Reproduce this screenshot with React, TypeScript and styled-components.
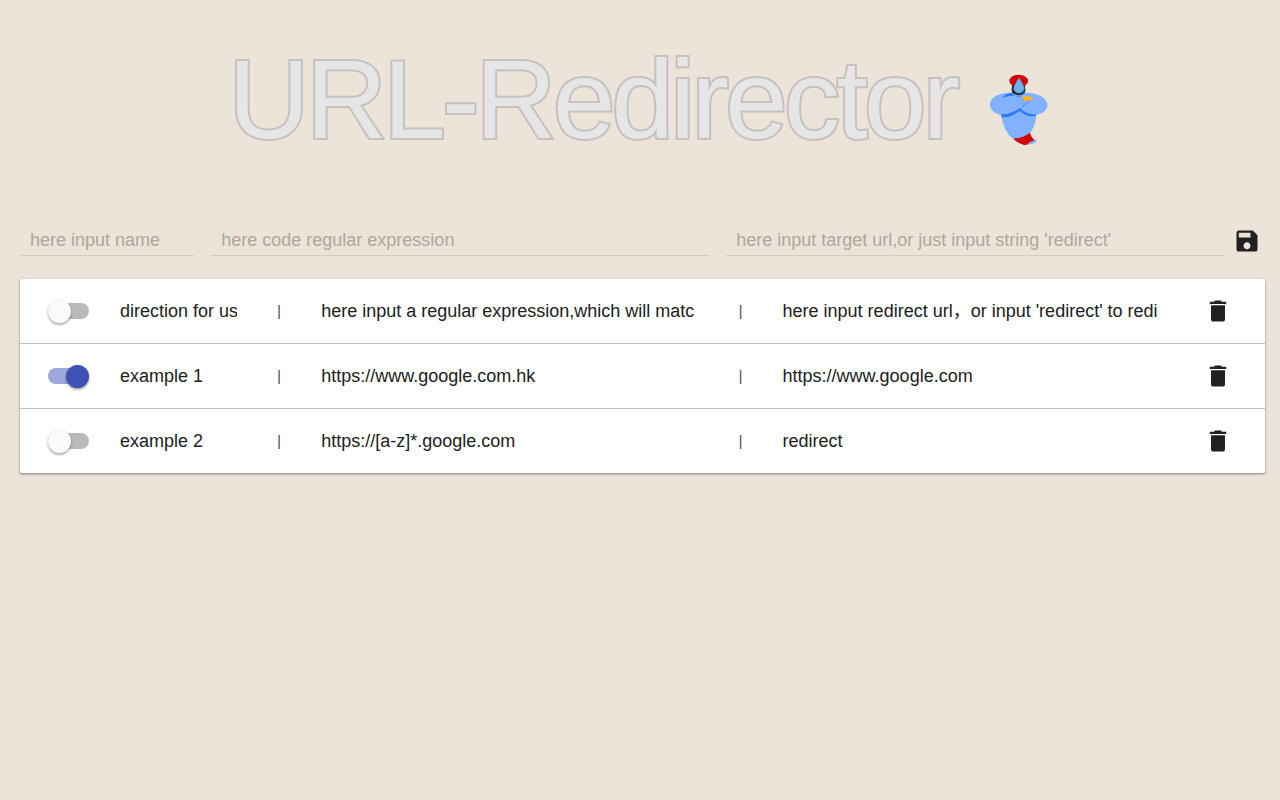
import React, { useState } from "react";
import styled, { createGlobalStyle } from "styled-components";

const GlobalStyle = createGlobalStyle`
  *, *::before, *::after { box-sizing: border-box; }
  body {
    margin: 0;
    background: #ece4d9;
    color: #212121;
    font-family: "Liberation Sans", Arial, "Noto Sans CJK SC", sans-serif;
    font-size: 18px;
  }
`;

const Page = styled.main`
  padding: 35px 15px 35px 20px;
`;

const Header = styled.header`
  display: flex;
  justify-content: center;
  align-items: center;
  gap: 23px;
  height: 130px;
  padding-left: 3px;
`;

const Title = styled.h1`
  margin: 0;
  font-size: 112px;
  font-weight: 400;
  line-height: 130px;
  letter-spacing: -0.032em;
  white-space: nowrap;
  color: #e6e6e6;
  -webkit-text-stroke: 4px #c5c1bf;
  paint-order: stroke fill;
`;

const GenieImage = styled.svg`
  flex: none;
  width: 80px;
  height: 90px;
  margin-top: 20px;
`;

const Form = styled.form`
  display: grid;
  grid-template-columns: 7fr 20fr 20fr 24px;
  column-gap: 17px;
  align-items: center;
  margin: 61px 0 23px;
`;

const Field = styled.input`
  min-width: 0;
  width: 100%;
  height: 30px;
  padding: 0 10px;
  border: 0;
  border-bottom: 1px solid #d3cbc1;
  background: transparent;
  color: inherit;
  font: inherit;
  outline: none;
  &::placeholder { color: #aea79d; opacity: 1; }
  &:focus { border-bottom-color: #3f51b5; }
`;

const IconButton = styled.button<{ $pull?: boolean }>`
  display: block;
  width: 28px;
  height: 28px;
  margin: 0 0 0 ${(p) => (p.$pull ? "-8px" : "0")};
  padding: 0;
  border: 0;
  background: none;
  color: #212121;
  cursor: pointer;
`;

const Glyph = styled.svg`
  display: block;
  width: 28px;
  height: 28px;
  fill: currentColor;
`;

const Rules = styled.ul`
  margin: 0;
  padding: 0;
  list-style: none;
  background: #fff;
  border-radius: 2px;
  box-shadow: 0 1px 3px rgba(0, 0, 0, 0.25), 0 1px 2px rgba(0, 0, 0, 0.25);
`;

const Rule = styled.li`
  display: grid;
  grid-template-columns: 100px 117fr 84px 377fr 84px 377fr 105px;
  align-items: center;
  min-height: 64px;
  & + & {
    min-height: 65px;
    border-top: 1px solid #c4c4c4;
  }
`;

const Value = styled.input`
  min-width: 0;
  width: 100%;
  height: 28px;
  padding: 0;
  border: 0;
  background: transparent;
  color: inherit;
  font: inherit;
  line-height: 28px;
  outline: none;
`;

const Divider = styled.span`
  text-align: center;
  font-size: 14px;
  line-height: 20px;
  color: #444;
`;

const Switch = styled.input`
  appearance: none;
  display: flex;
  align-items: center;
  width: 41px;
  height: 16px;
  margin: 0 0 0 28px;
  border-radius: 8px;
  background: #bababa;
  cursor: pointer;
  &::before {
    content: "";
    width: 23px;
    height: 23px;
    flex: none;
    border-radius: 50%;
    background: #fafafa;
    box-shadow: 0 1px 3px rgba(0, 0, 0, 0.25), 0 2px 2px rgba(0, 0, 0, 0.16);
  }
  &:checked { background: #9fa8da; justify-content: flex-end; }
  &:checked::before { background: #3f51b5; }
`;

const Actions = styled.div`
  display: flex;
  justify-content: flex-end;
  padding-right: 33px;
`;

const Genie = () => (
  <GenieImage viewBox="0 0 240 270" aria-hidden="true">
    <ellipse cx="119" cy="48" rx="28" ry="19" fill="#d50000" />
    <path d="M100 60Q96 72 99 82Q106 95 120 95Q134 95 138 82Q141 72 137 60Z" fill="#263238" />
    <path d="M120 38Q134 59 136 70Q134 84 120 84Q106 84 104 70Q106 59 120 38Z" fill="#68b2f0" />
    <path d="M66 148L90 120H150L172 148Q170 182 152 207Q160 226 174 227Q167 236 155 238Q126 243 105 225Q72 200 66 148Z" fill="#82b1ff" />
    <path d="M104 221Q134 219 152 203Q156 216 167 226Q152 230 142 240Q119 238 104 221Z" fill="#d50000" />
    <path d="M98 83Q64 82 42 98Q31 108 33 123Q37 143 68 151Q98 154 121 136Q142 153 171 150Q203 143 206 123Q204 102 184 92Q162 82 138 83Q120 99 98 83Z" fill="#82b1ff" />
    <path d="M98 83Q104 95 121 95L130 95Q99 88 70 98Q79 86 98 83Z" fill="#2979ff" />
    <path d="M66 148Q98 149 122 129Q142 150 172 148L171 153Q144 157 121 137Q98 158 68 157Z" fill="#2979ff" />
    <path d="M117 136Q129 129 135 119Q146 112 159 104Q145 114 136 121Q129 128 123 136Z" fill="#2979ff" />
    <path d="M126 94L152 94Q160 96 160 103Q155 108 143 107L132 108Q139 102 126 94Z" fill="#fbb814" />
  </GenieImage>
);

const SaveIcon = () => (
  <Glyph viewBox="0 0 24 24" aria-hidden="true">
    <path d="M17 3H5c-1.110 0-2 .9-2 2v14c0 1.100.89 2 2 2h14c1.100 0 2-.9 2-2V7l-4-4zm-5 16c-1.660 0-3-1.340-3-3s1.340-3 3-3 3 1.340 3 3-1.340 3-3 3zm3-10H5V5h10v4z" />
  </Glyph>
);

const TrashIcon = () => (
  <Glyph viewBox="0 0 24 24" aria-hidden="true">
    <path d="M6 19c0 1.100.9 2 2 2h8c1.100 0 2-.9 2-2V7H6v12zM19 4h-3.500l-1-1h-5l-1 1H5v2h14V4z" />
  </Glyph>
);

const initialRules = [
  {
    name: "direction for us",
    pattern: "here input a regular expression,which will matc",
    target: "here input redirect url，or input 'redirect' to redi",
    enabled: false,
  },
  {
    name: "example 1",
    pattern: "https://www.google.com.hk",
    target: "https://www.google.com",
    enabled: true,
  },
  {
    name: "example 2",
    pattern: "https://[a-z]*.google.com",
    target: "redirect",
    enabled: false,
  },
];

export default function App() {
  const [rules, setRules] = useState(initialRules);
  const toggle = (index: number) =>
    setRules(rules.map((r, i) => (i === index ? { ...r, enabled: !r.enabled } : r)));
  const remove = (index: number) => setRules(rules.filter((_, i) => i !== index));

  return (
    <>
      <GlobalStyle />
      <Page>
        <Header>
          <Title>URL-Redirector</Title>
          <Genie />
        </Header>
        <Form onSubmit={(e) => e.preventDefault()}>
          <Field aria-label="Name" placeholder="here input name" />
          <Field aria-label="Regular expression" placeholder="here code regular expression" />
          <Field
            aria-label="Target url"
            placeholder="here input target url,or just input string 'redirect'"
          />
          <IconButton type="submit" aria-label="Save" $pull>
            <SaveIcon />
          </IconButton>
        </Form>
        <Rules>
          {rules.map((rule, i) => (
            <Rule key={rule.name}>
              <Switch
                type="checkbox"
                role="switch"
                aria-label={`Enable ${rule.name}`}
                checked={rule.enabled}
                onChange={() => toggle(i)}
              />
              <Value aria-label="Name" defaultValue={rule.name} />
              <Divider>|</Divider>
              <Value aria-label="Regular expression" defaultValue={rule.pattern} />
              <Divider>|</Divider>
              <Value aria-label="Target url" defaultValue={rule.target} />
              <Actions>
                <IconButton
                  type="button"
                  aria-label={`Delete ${rule.name}`}
                  onClick={() => remove(i)}
                >
                  <TrashIcon />
                </IconButton>
              </Actions>
            </Rule>
          ))}
        </Rules>
      </Page>
    </>
  );
}
